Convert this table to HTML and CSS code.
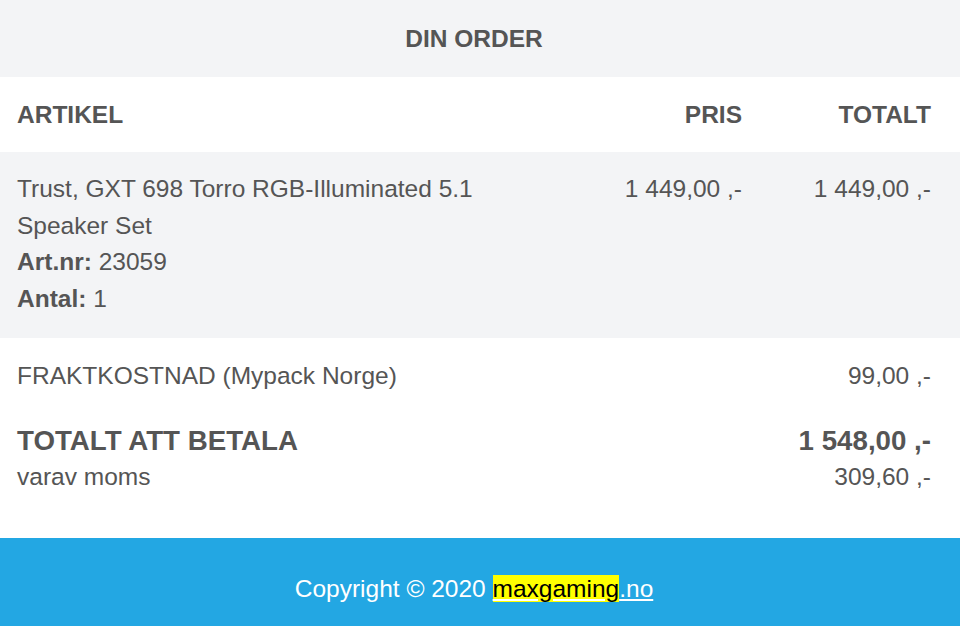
FILE: index.html
```html
<!DOCTYPE html>
<html lang="sv">
<head>
<meta charset="utf-8">
<title>Din order</title>
<link rel="stylesheet" href="styles.css">
</head>
<body>
<div class="page">
  <div class="title">DIN ORDER</div>
  <div class="row heads">
    <div class="c-art">ARTIKEL</div>
    <div class="c-pris">PRIS</div>
    <div class="c-tot">TOTALT</div>
  </div>
  <div class="row item">
    <div class="c-art">
      <div>Trust, GXT 698 Torro RGB-Illuminated 5.1 Speaker Set</div>
      <div><b>Art.nr:</b> 23059</div>
      <div><b>Antal:</b> 1</div>
    </div>
    <div class="c-pris">1 449,00 ,-</div>
    <div class="c-tot">1 449,00 ,-</div>
  </div>
  <div class="summary">
    <div class="sum-line ship"><span>FRAKTKOSTNAD (Mypack Norge)</span><span>99,00 ,-</span></div>
    <div class="sum-line grand"><span>TOTALT ATT BETALA</span><span>1 548,00 ,-</span></div>
    <div class="sum-line"><span>varav moms</span><span>309,60 ,-</span></div>
  </div>
  <div class="footer">Copyright © 2020 <a href="#"><mark>maxgaming</mark>.no</a></div>
</div>
</body>
</html>
```
FILE: styles.css
```css
html, body {
  margin: 0;
  padding: 0;
  background: #ffffff;
}
body {
  font-family: "Liberation Sans", Arial, sans-serif;
  font-size: 24.5px;
  color: #555555;
}
.page {
  width: 960px;
}
.title {
  background: #f3f4f6;
  height: 77px;
  display: flex;
  align-items: center;
  justify-content: center;
  font-weight: bold;
  padding: 1px 29px 0 17px;
  box-sizing: border-box;
}
.row {
  display: grid;
  grid-template-columns: 1fr 200px 189px;
  padding: 0 29px 0 17px;
}
.c-pris, .c-tot {
  text-align: right;
}
.heads {
  height: 75px;
  align-items: center;
  font-weight: bold;
}
.item {
  background: #f3f4f6;
  height: 186px;
  box-sizing: border-box;
  padding-top: 19px;
  line-height: 36.5px;
  align-items: start;
}
.item .c-art {
  padding-right: 40px;
}
.summary {
  padding: 20px 29px 43px 17px;
  line-height: 36px;
}
.sum-line {
  display: flex;
  justify-content: space-between;
}
.ship {
  margin-bottom: 29px;
}
.grand {
  font-weight: bold;
  font-size: 27.7px;
}
.footer {
  background: #23a7e3;
  color: #ffffff;
  height: 88px;
  box-sizing: border-box;
  padding: 37px 29px 0 17px;
  line-height: 28px;
  text-align: center;
}
.footer a {
  color: #ffffff;
  text-decoration: underline;
}
.footer mark {
  background: #ffff00;
  color: #000000;
}
```
